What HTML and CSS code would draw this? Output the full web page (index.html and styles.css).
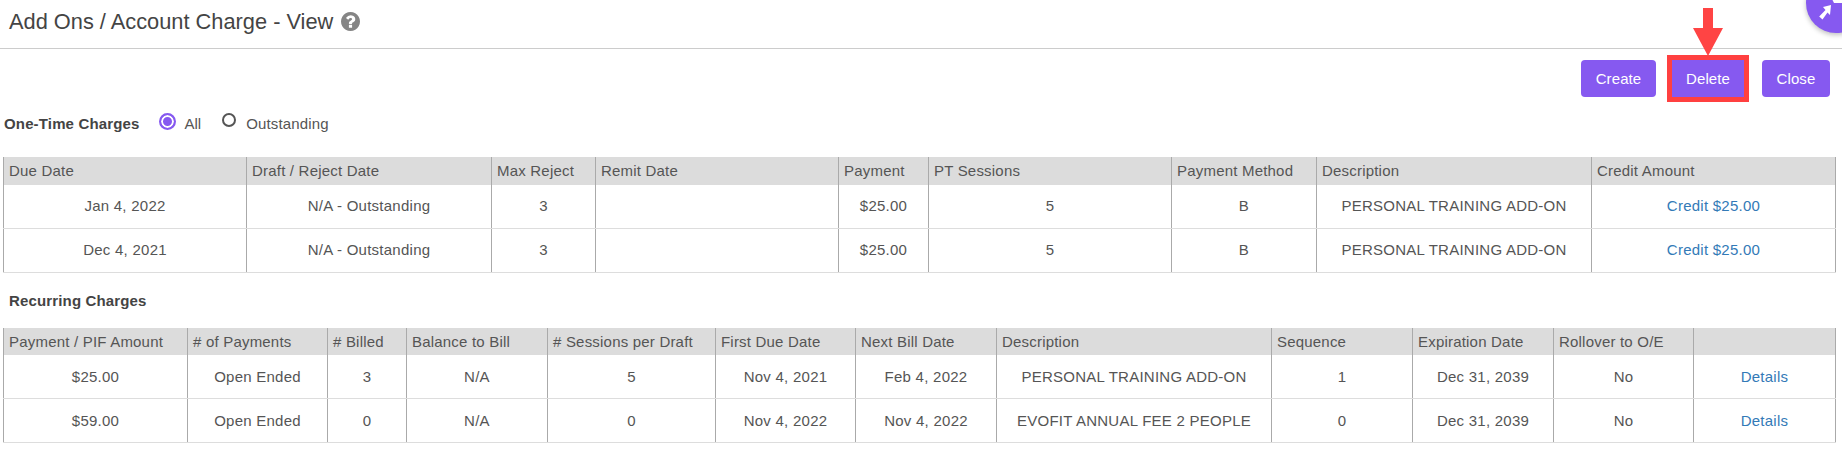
FILE: index.html
```html
<!DOCTYPE html>
<html lang="en">
<head>
<meta charset="utf-8">
<title>Add Ons / Account Charge - View</title>
<link rel="stylesheet" href="styles.css">
</head>
<body>
<header class="page-head">
  <h1 class="title">Add Ons / Account Charge - View</h1>
  <svg class="help" viewBox="128 128 1536 1536" aria-hidden="true"><path d="M1024 1376v-192q0-14-9-23t-23-9h-192q-14 0-23 9t-9 23v192q0 14 9 23t23 9h192q14 0 23-9t9-23zm256-672q0-88-55.500-163t-138.500-116-170-41q-243 0-371 213-15 24 8 42l132 100q7 6 19 6 16 0 25-12 53-68 86-92 34-24 86-24 48 0 85.500 26t37.500 59q0 38-20 61t-68 45q-63 28-115.500 86.500t-52.500 125.500v36q0 14 9 23t23 9h192q14 0 23-9t9-23q0-19 21.500-49.500t54.500-49.500q32-18 49-28.500t46-35 44.500-48 28-60.500 12.500-81zm384 192q0 209-103 385.500t-279.500 279.500-385.500 103-385.500-103-279.500-279.500-103-385.500 103-385.500 279.500-279.500 385.500-103 385.500 103 279.500 279.500 103 385.500z"/></svg>
</header>

<div class="fab">
  <svg class="fab-icon" viewBox="0 0 26 24" aria-hidden="true"><path d="M15 5L14 15L11.500 12.500L6.500 19.500L3.200 16.500L9.500 10L7 7Z"/><path d="M16.500 0H26V3H18Z"/></svg>
</div>

<div class="toolbar">
  <button class="btn btn-create">Create</button>
  <span class="marked">
    <svg class="arrow" viewBox="0 0 30 48" aria-hidden="true"><path d="M10 0H20V20H30L15 48L0 20H10Z"/></svg>
    <button class="btn btn-delete">Delete</button>
  </span>
  <button class="btn btn-close">Close</button>
</div>

<div class="filter">
  <strong class="label">One-Time Charges</strong>
  <span class="radio radio-on"></span><span class="radio-text radio-text-all">All</span>
  <span class="radio radio-off"></span><span class="radio-text radio-text-out">Outstanding</span>
</div>

<table class="grid grid-one">
  <colgroup>
    <col class="w243"><col class="w245"><col class="w104"><col class="w243"><col class="w90"><col class="w243"><col class="w145"><col class="w275"><col class="w244">
  </colgroup>
  <thead>
    <tr><th>Due Date</th><th>Draft / Reject Date</th><th>Max Reject</th><th>Remit Date</th><th>Payment</th><th>PT Sessions</th><th>Payment Method</th><th>Description</th><th>Credit Amount</th></tr>
  </thead>
  <tbody>
    <tr><td>Jan 4, 2022</td><td>N/A - Outstanding</td><td>3</td><td></td><td>$25.00</td><td>5</td><td>B</td><td>PERSONAL TRAINING ADD-ON</td><td><a class="link" href="#">Credit $25.00</a></td></tr>
    <tr><td>Dec 4, 2021</td><td>N/A - Outstanding</td><td>3</td><td></td><td>$25.00</td><td>5</td><td>B</td><td>PERSONAL TRAINING ADD-ON</td><td><a class="link" href="#">Credit $25.00</a></td></tr>
  </tbody>
</table>

<h2 class="label section">Recurring Charges</h2>

<table class="grid grid-two">
  <colgroup>
    <col class="w184"><col class="w140"><col class="w79"><col class="w141"><col class="w168"><col class="w140"><col class="w141"><col class="w275"><col class="w141"><col class="w141"><col class="w140"><col class="w142">
  </colgroup>
  <thead>
    <tr><th>Payment / PIF Amount</th><th># of Payments</th><th># Billed</th><th>Balance to Bill</th><th># Sessions per Draft</th><th>First Due Date</th><th>Next Bill Date</th><th>Description</th><th>Sequence</th><th>Expiration Date</th><th>Rollover to O/E</th><th></th></tr>
  </thead>
  <tbody>
    <tr><td>$25.00</td><td>Open Ended</td><td>3</td><td>N/A</td><td>5</td><td>Nov 4, 2021</td><td>Feb 4, 2022</td><td>PERSONAL TRAINING ADD-ON</td><td>1</td><td>Dec 31, 2039</td><td>No</td><td><a class="link" href="#">Details</a></td></tr>
    <tr><td>$59.00</td><td>Open Ended</td><td>0</td><td>N/A</td><td>0</td><td>Nov 4, 2022</td><td>Nov 4, 2022</td><td>EVOFIT ANNUAL FEE 2 PEOPLE</td><td>0</td><td>Dec 31, 2039</td><td>No</td><td><a class="link" href="#">Details</a></td></tr>
  </tbody>
</table>
</body>
</html>
```
FILE: styles.css
```css
html, body { margin: 0; padding: 0; background: #fff; }
body {
  width: 1842px;
  height: 451px;
  overflow: hidden;
  position: relative;
  font-family: "Liberation Sans", Arial, sans-serif;
  font-size: 15px;
  color: #555;
}

.page-head {
  display: flex;
  align-items: center;
  gap: 8px;
  height: 49px;
  padding: 0 0 5px 9px;
  box-sizing: border-box;
  border-bottom: 1px solid #ccc;
}
.title { margin: 0; font-size: 21.8px; font-weight: 400; color: #444; }
.help { width: 19px; height: 19px; fill: #858585; }

.fab {
  position: absolute;
  left: 1806px;
  top: -27px;
  width: 60px;
  height: 60px;
  border-radius: 50%;
  background: #8659f0;
  box-shadow: 0 2px 5px rgba(0,0,0,.25);
}
.fab-icon { position: absolute; left: 10px; top: 27px; width: 26px; height: 24px; fill: #fff; }

.toolbar {
  display: flex;
  justify-content: flex-end;
  gap: 16px;
  padding: 11px 12px 0 0;
}
.btn {
  height: 37px;
  border: 0;
  border-radius: 4px;
  background: #8659f0;
  color: #fff;
  font: 15px "Liberation Sans", Arial, sans-serif;
  letter-spacing: .1px;
  padding: 0;
}
.btn-create { width: 75px; }
.btn-delete { width: 72px; display: block; border-radius: 0; outline: 5px solid #ff4040; }
.btn-close { width: 68px; margin-left: 2px; }
.marked { position: relative; display: block; }
.arrow { position: absolute; left: 21px; top: -52px; width: 30px; height: 48px; fill: #ff4444; }

.filter {
  display: flex;
  align-items: center;
  height: 24px;
  margin-top: 14px;
  padding-left: 4px;
}
.label { font-size: 15px; font-weight: 700; color: #444; letter-spacing: .15px; margin: 0; }
.radio { display: block; box-sizing: border-box; border-radius: 50%; margin-top: -4px; }
.radio-on {
  width: 17px; height: 17px;
  margin-left: 19px;
  background: #8659f0;
  border: 2px solid #8659f0;
  box-shadow: inset 0 0 0 2px #fff;
}
.radio-off {
  width: 14px; height: 14px;
  margin-left: 21px;
  margin-top: -6px;
  border: 2.5px solid #555;
}
.radio-text { margin-left: 9px; }
.radio-text-out { margin-left: 10px; letter-spacing: .15px; }

.grid {
  table-layout: fixed;
  border-collapse: collapse;
  width: 1832px;
  margin-left: 3px;
  margin-top: 22px;
  font-size: 15px;
}
.grid th, .grid td {
  border-left: 1px solid #aaa;
  border-right: 1px solid #aaa;
  padding: 0 5px 2px;
  white-space: nowrap;
  overflow: hidden;
}
.grid th {
  height: 25px;
  background: #dcdcdc;
  font-weight: 400;
  text-align: left;
  color: #555;
  letter-spacing: .2px;
}
.grid-one th { height: 26px; }
.grid td {
  height: 41px;
  text-align: center;
  border-bottom: 1px solid #ddd;
  letter-spacing: .25px;
}
.grid-two th, .grid-two td { padding-bottom: 0; }
.grid-two th { height: 27px; }
.grid-two td { height: 43px; }
.link { color: #337ab7; text-decoration: none; }

.section { margin: 20px 0 0 9px; line-height: 16px; }
.grid-two { margin-top: 19px; }

.w79 { width: 79px; } .w90 { width: 90px; } .w104 { width: 104px; }
.w140 { width: 140px; } .w141 { width: 141px; } .w142 { width: 142px; } .w145 { width: 145px; }
.w168 { width: 168px; } .w184 { width: 184px; }
.w243 { width: 243px; } .w244 { width: 244px; } .w245 { width: 245px; }
.w275 { width: 275px; }
```
